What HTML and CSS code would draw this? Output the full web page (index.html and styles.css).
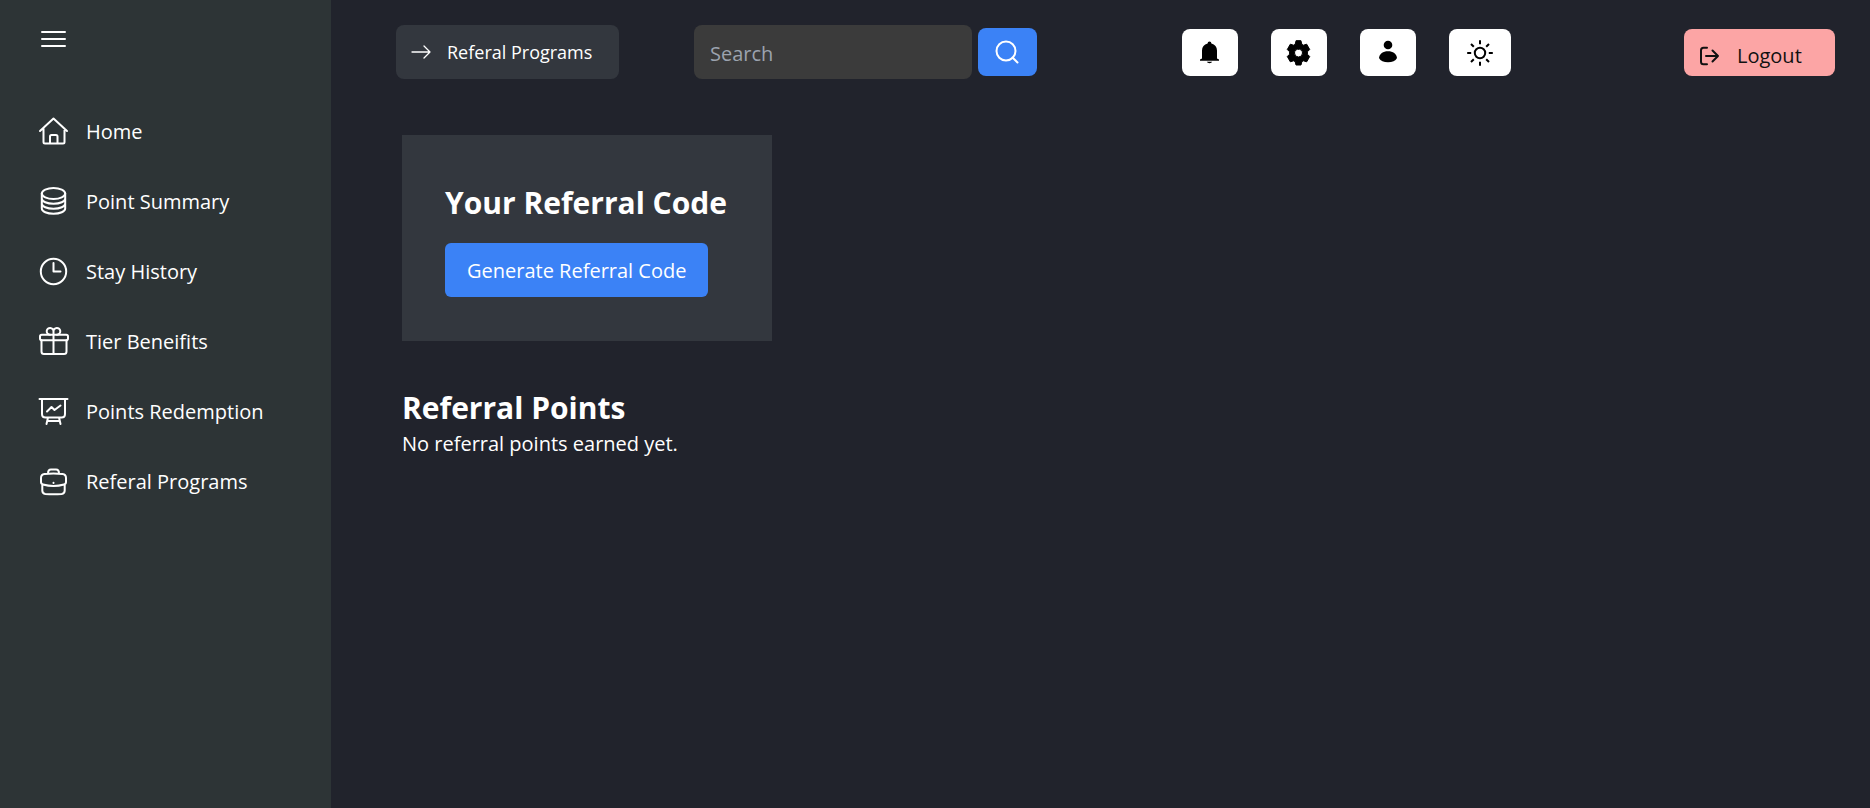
FILE: index.html
```html
<!DOCTYPE html>
<html lang="en">
<head>
<meta charset="utf-8">
<title>Referal Programs</title>
<link rel="stylesheet" href="styles.css">
</head>
<body>
<div class="app">
  <aside class="sidebar">
    <button class="menu-toggle" type="button" aria-label="Toggle menu">
      <svg class="icon" viewBox="0 0 30 30"><path d="M4 8h23M4 15h23M4 22h23"/></svg>
    </button>
    <nav class="nav">
      <a class="nav-link" href="#">
        <svg class="icon" viewBox="0 0 30 30"><path d="M2 15 15.500 2.500 29 15M5.500 12.500V26q0 1.500 1.500 1.500h18q1.500 0 1.500-1.500V12.500M12 27V20.500q0-1.500 1.500-1.500H18q1.500 0 1.500 1.500V27"/></svg>
        <span>Home</span>
      </a>
      <a class="nav-link" href="#">
        <svg class="icon" viewBox="0 0 30 30"><ellipse cx="15.500" cy="7.500" rx="11.700" ry="5.500"/><path d="M3.800 7.500v15c0 3 5.200 5.300 11.700 5.300s11.700-2.300 11.700-5.300v-15M3.800 12.500c0 3 5.200 5.200 11.700 5.200s11.700-2.200 11.700-5.200M3.800 17.500c0 3 5.200 5.200 11.700 5.200s11.700-2.200 11.700-5.200"/></svg>
        <span>Point Summary</span>
      </a>
      <a class="nav-link" href="#">
        <svg class="icon" viewBox="0 0 30 30"><circle cx="15.500" cy="15.500" r="12.700"/><path d="M15.500 7v8.500h7"/></svg>
        <span>Stay History</span>
      </a>
      <a class="nav-link" href="#">
        <svg class="icon" viewBox="0 0 30 30"><rect x="2" y="8.700" width="28" height="5.500" rx="1.800"/><path d="M3.500 14.200V25.500q0 2.500 2.500 2.500h20q2.500 0 2.500-2.500V14.200M15.500 8.700V28M15.500 8.500V5.500A3.400 3.400 0 1 0 12 8.700M15.500 8.500V5.500A3.400 3.400 0 1 1 19 8.700"/></svg>
        <span>Tier Beneifits</span>
      </a>
      <a class="nav-link" href="#">
        <svg class="icon" viewBox="0 0 30 30"><path d="M1.500 3h28M4 3v15q0 3.500 3.500 3.500h16q3.500 0 3.500-3.500V3M10 21.500 8.500 28M21 21.500l1.500 6.500M9.500 25h12M9 15.500l4.500-4.500 3 3 6-4.500"/></svg>
        <span>Points Redemption</span>
      </a>
      <a class="nav-link" href="#">
        <svg class="icon" viewBox="0 0 30 30"><path d="M10 7.500q0-4 3-4h5q3 0 3 4M3 12q0-3.500 3.500-4 9-1 18 0 3.500.5 3.500 4v4q0 2-2 2.500-10.500 3-21 0-2-.5-2-2.500zM4.300 18.500v6q0 3 3 3.400 8 .6 16.400 0 3-.4 3-3.400v-6M15.500 16.700v.3"/></svg>
        <span>Referal Programs</span>
      </a>
    </nav>
  </aside>

  <div class="page">
    <header class="topbar">
      <div class="crumb">
        <svg class="icon-small" viewBox="0 0 20 20"><path d="M1 10h18M13 4l6 6-6 6"/></svg>
        <span>Referal Programs</span>
      </div>
      <form class="search">
        <input class="search-input" type="search" placeholder="Search" aria-label="Search">
        <button class="search-button" type="button" aria-label="Submit search">
          <svg class="icon-action" viewBox="0 0 26 26"><circle cx="12" cy="12" r="9.500"/><path d="m18.500 18.500 5 5"/></svg>
        </button>
      </form>
      <div class="actions">
        <button class="action" type="button" aria-label="Notifications">
          <svg class="icon-action solid" viewBox="0 0 26 26"><path d="M12.500 1.500a1.900 1.900 0 0 1 1.900 1.900c3.500 1 5.600 3.500 5.600 7.100v8l2 1v1.300H3v-1.300l2-1v-8C5 6.900 7.100 4.400 10.600 3.400a1.900 1.900 0 0 1 1.900-1.900zM9.800 21.800h5.400a2.800 2 0 0 1-5.400 0z"/></svg>
        </button>
        <button class="action" type="button" aria-label="Settings">
          <svg class="icon-action gear" viewBox="0 0 26 26"><path d="m10 1-.8 3.300-1.600.9-3.300-1L1.300 9.500l2.300 2.300v2.400L1.300 16.500l3 5.300 3.300-1 1.600.9L10 25h5l.8-3.300 1.600-.9 3.300 1 3-5.300-2.300-2.300v-2.400l2.300-2.300-3-5.300-3.300 1-1.600-.9L15 1zM12.500 9a4 4 0 1 1 0 8 4 4 0 0 1 0-8z"/></svg>
        </button>
        <button class="action" type="button" aria-label="Profile">
          <svg class="icon-action solid" viewBox="0 0 26 26"><circle cx="13" cy="5" r="4.300"/><path d="M4 18c.5-4 4-6.700 9-6.700s8.500 2.700 9 6.700c-1.500 3-4.700 4.300-9 4.300S5.500 21 4 18z"/></svg>
        </button>
        <button class="action action-wide" type="button" aria-label="Toggle theme">
          <svg class="icon-action sun" viewBox="0 0 26 26"><circle cx="13" cy="13" r="5.200"/><path d="M13 .2v4M13 21.800v4M.2 13h4M21.800 13h4M4 4l2.800 2.800M19.200 19.200 22 22M4 22l2.800-2.800M19.200 6.800 22 4"/></svg>
        </button>
      </div>
      <button class="logout" type="button">
        <svg class="icon-small" viewBox="0 0 20 20"><path d="M8 1.700H4.500Q2 1.700 2 4.200v11.600q0 2.500 2.500 2.500H8M7 10h12M13.500 4.500 19 10l-5.500 5.500"/></svg>
        <span>Logout</span>
      </button>
    </header>

    <main class="content">
      <section class="card">
        <h2 class="title">Your Referral Code</h2>
        <button class="generate" type="button">Generate Referral Code</button>
      </section>
      <section class="points">
        <h2 class="title">Referral Points</h2>
        <p class="note">No referral points earned yet.</p>
      </section>
    </main>
  </div>
</div>
</body>
</html>
```
FILE: styles.css
```css
* {
  box-sizing: border-box;
}

body {
  margin: 0;
  background: #21232c;
  color: #fff;
  font-family: "Segoe UI", "Open Sans", "Noto Sans", sans-serif;
  font-size: 20px;
  line-height: 32px;
}

button,
input {
  border: 0;
  font: inherit;
  color: inherit;
}

button {
  cursor: pointer;
}

svg {
  display: block;
  flex: none;
  fill: none;
  stroke: currentColor;
  stroke-width: 2;
  stroke-linecap: round;
  stroke-linejoin: round;
  overflow: visible;
}

h2,
p {
  margin: 0;
}

.app {
  display: flex;
  min-height: 100vh;
}

.sidebar {
  flex: none;
  width: 331px;
  padding: 24px 38px;
  background: #2d3436;
}

.menu-toggle {
  display: block;
  padding: 0;
  background: none;
}

.icon {
  width: 30px;
  height: 30px;
}

.icon-small {
  width: 20px;
  height: 20px;
}

.icon-action {
  width: 26px;
  height: 26px;
}

.nav {
  display: flex;
  flex-direction: column;
  gap: 36px;
  padding-top: 60px;
}

.nav-link {
  display: flex;
  align-items: center;
  gap: 18px;
  color: #fff;
  text-decoration: none;
}

.nav-link span {
  padding-top: 2px;
}

.page {
  flex: 1;
  min-width: 0;
}

.topbar {
  display: flex;
  align-items: center;
  padding: 25px 35px 0 65px;
}

.crumb {
  display: flex;
  align-items: center;
  gap: 16px;
  width: 223px;
  height: 54px;
  padding: 0 15px;
  border-radius: 8px;
  background: #33373e;
  font-size: 18px;
  white-space: nowrap;
}

.crumb .icon-small {
  stroke-width: 1.3;
}

.search {
  display: flex;
  align-items: center;
  gap: 6px;
  margin-left: 75px;
}

.search-input {
  width: 278px;
  height: 54px;
  padding: 2px 16px 0;
  border-radius: 8px;
  background: #3b3b3b;
  appearance: none;
}

.search-input::placeholder {
  color: #9ca3af;
  opacity: 1;
}

.search-button {
  display: flex;
  align-items: center;
  justify-content: center;
  width: 59px;
  height: 48px;
  padding: 0 2px 0 0;
  border-radius: 8px;
  background: #3b82f6;
}

.actions {
  display: flex;
  gap: 33px;
  margin-left: 145px;
}

.action {
  display: flex;
  align-items: center;
  justify-content: center;
  width: 56px;
  height: 47px;
  padding: 2px 0 0;
  border-radius: 8px;
  background: #fff;
  color: #000;
}

.action-wide {
  width: 62px;
}

.solid {
  fill: currentColor;
  stroke: none;
}

.gear {
  fill: currentColor;
  fill-rule: evenodd;
  stroke-width: 1;
}

.sun {
  stroke-linecap: butt;
}

.logout {
  display: flex;
  align-items: center;
  gap: 18px;
  width: 151px;
  height: 47px;
  margin-left: auto;
  padding: 7px 15px 0;
  border-radius: 8px;
  background: #fca5a5;
  color: #111;
}

.content {
  display: flex;
  flex-direction: column;
  align-items: flex-start;
  gap: 48px;
  padding: 56px 71px;
}

.card {
  padding: 49px 45px 44px 43px;
  background: #33373e;
}

.title {
  font-size: 30px;
  font-weight: 700;
  line-height: 38px;
}

.generate {
  height: 54px;
  margin-top: 21px;
  padding: 2px 22px 0;
  border-radius: 6px;
  background: #3b82f6;
}

.note {
  padding-top: 1px;
}
```
